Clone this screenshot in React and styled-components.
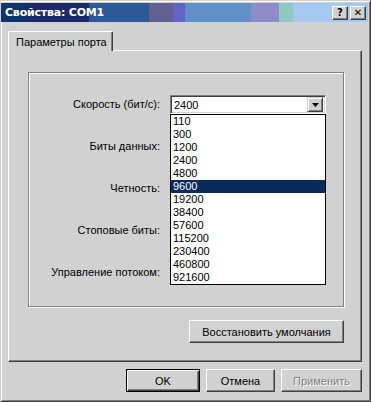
import React from 'react';
import styled, { createGlobalStyle } from 'styled-components';

const face = '#d1d1d1';

const GlobalStyle = createGlobalStyle`
  html, body {
    margin: 0;
    padding: 0;
    background: ${face};
  }
  * { box-sizing: border-box; }
`;

const speeds = ['110', '300', '1200', '2400', '4800', '9600', '19200', '38400', '57600', '115200', '230400', '460800', '921600'];

// only the first combo shows its value, the rest sit under the open list
const fields = [
  { label: 'Скорость (бит/с):', value: '2400', open: true },
  { label: 'Биты данных:' },
  { label: 'Четность:' },
  { label: 'Стоповые биты:' },
  { label: 'Управление потоком:' },
];

const App = () => {
  return (
    <>
      <GlobalStyle />
      <Window>
        <TitleBar>
          <Title>Свойства: COM1</Title>
          <CaptionButtons>
            <CaptionButton>?</CaptionButton>
            <CaptionButton>✕</CaptionButton>
          </CaptionButtons>
        </TitleBar>
        <Body>
          <TabStrip>
            <Tab>Параметры порта</Tab>
          </TabStrip>
          <TabPanel>
            <PanelColumn>
              <GroupBox>
                {fields.map((f) => (
                  <React.Fragment key={f.label}>
                    <Label>{f.label}</Label>
                    <Combo>
                      <ComboValue>{f.value}</ComboValue>
                      <ArrowButton>
                        <svg width="7" height="4" viewBox="0 0 7 4">
                          <path d="M0 0h7L3.5 4z" fill="#000" />
                        </svg>
                      </ArrowButton>
                      {f.open && (
                        <DropList>
                          {speeds.map((s) => (
                            <DropItem key={s} $selected={s === '9600'}>{s}</DropItem>
                          ))}
                        </DropList>
                      )}
                    </Combo>
                  </React.Fragment>
                ))}
              </GroupBox>
              <RestoreRow>
                <Button $w={155}>Восстановить умолчания</Button>
              </RestoreRow>
            </PanelColumn>
          </TabPanel>
          <DialogButtons>
            <Button $w={74} $default>OK</Button>
            <Button $w={69}>Отмена</Button>
            <Button $w={81} disabled>Применить</Button>
          </DialogButtons>
        </Body>
      </Window>
    </>
  );
};

const Window = styled.div`
  width: 371px;
  height: 402px;
  background: ${face};
  border: 1px solid;
  border-color: ${face} #404040 #404040 ${face};
  box-shadow: inset 1px 1px #fff, inset -1px -1px #808080;
  padding: 2px;
  font-family: "Liberation Sans", Arial, sans-serif;
  font-size: 11px;
  color: #000;
  display: flex;
  flex-direction: column;
`;

const TitleBar = styled.div`
  height: 19px;
  margin-left: -2px;
  display: flex;
  align-items: center;
  justify-content: space-between;
  padding: 0 2px 0 4px;
  background: linear-gradient(to right,
    #10346a 0px, #10346a 28px,
    #202a66 28px, #202a66 88px,
    #2c5a94 88px, #2c5a94 148px,
    #62608f 148px, #62608f 172px,
    #6462c8 172px, #6462c8 184px,
    #5f90c8 184px, #5f90c8 250px,
    #8e8cc8 250px, #8e8cc8 278px,
    #90c8c2 278px, #90c8c2 292px,
    #a4c8f0 292px, #a4c8f0 100%);
`;

const Title = styled.span`
  color: #fff;
  font-family: "DejaVu Sans", Verdana, sans-serif;
  font-weight: bold;
  font-size: 11px;
  letter-spacing: -0.2px;
`;

const CaptionButtons = styled.div`
  display: flex;
  gap: 2px;
`;

const CaptionButton = styled.div`
  width: 16px;
  height: 14px;
  background: ${face};
  border: 1px solid;
  border-color: #fff #404040 #404040 #fff;
  box-shadow: inset -1px -1px #808080;
  display: flex;
  align-items: center;
  justify-content: center;
  font-family: "DejaVu Sans", sans-serif;
  font-weight: bold;
  font-size: 10px;
  line-height: 1;
`;

const Body = styled.div`
  flex: 1;
  display: flex;
  flex-direction: column;
  padding: 9px 5px 0 5px;
`;

const TabStrip = styled.div`
  display: flex;
  height: 19px;
  position: relative;
  z-index: 1;
`;

const Tab = styled.div`
  width: 105px;
  height: 20px;
  padding: 4px 0 0 7px;
  background: ${face};
  border-top: 1px solid #fff;
  border-left: 1px solid #fff;
  border-right: 1px solid #404040;
  box-shadow: inset -1px 0 #808080;
  border-radius: 2px 2px 0 0;
`;

const TabPanel = styled.div`
  width: 354px;
  height: 312px;
  border: 1px solid;
  border-color: #fff #404040 #404040 #fff;
  box-shadow: inset -1px -1px #808080;
  padding: 21px 0 0 19px;
`;

const PanelColumn = styled.div`
  width: 316px;
  display: flex;
  flex-direction: column;
`;

const GroupBox = styled.div`
  height: 235px;
  border: 1px solid #808080;
  box-shadow: inset 1px 1px #fff, 1px 1px #fff;
  padding-top: 22px;
  display: grid;
  grid-template-columns: 141px 156px;
  grid-auto-rows: 19px;
  row-gap: 23px;
  align-content: start;
`;

const Label = styled.div`
  text-align: right;
  padding-right: 10px;
  line-height: 19px;
`;

const Combo = styled.div`
  position: relative;
  height: 19px;
  background: #fff;
  border: 1px solid;
  border-color: #808080 #fff #fff #808080;
  box-shadow: inset 1px 1px #404040, inset -1px -1px ${face};
  display: flex;
  align-items: center;
  padding: 2px;
`;

const ComboValue = styled.span`
  flex: 1;
  padding-left: 1px;
`;

const ArrowButton = styled.div`
  width: 16px;
  height: 15px;
  background: ${face};
  border: 1px solid;
  border-color: ${face} #404040 #404040 ${face};
  box-shadow: inset 1px 1px #fff, inset -1px -1px #808080;
  display: flex;
  align-items: center;
  justify-content: center;
`;

const DropList = styled.div`
  position: absolute;
  left: -1px;
  top: 18px;
  width: 156px;
  border: 1px solid #000;
  background: #fff;
  z-index: 2;
`;

const DropItem = styled.div`
  height: 13px;
  line-height: 13px;
  padding-left: 2px;
  background: ${(p) => (p.$selected ? '#0a2a5c' : '#fff')};
  color: ${(p) => (p.$selected ? '#fff' : '#000')};
`;

const RestoreRow = styled.div`
  display: flex;
  justify-content: flex-end;
  margin-top: 13px;
`;

const Button = styled.button`
  width: ${(p) => p.$w}px;
  height: 23px;
  margin: 0;
  padding: 0;
  font-family: "Liberation Sans", Arial, sans-serif;
  font-size: 11px;
  color: #000;
  background: ${face};
  border: 1px solid;
  border-color: ${(p) => (p.$default ? '#000' : '#fff #404040 #404040 #fff')};
  box-shadow: ${(p) =>
    p.$default
      ? 'inset 1px 1px #fff, inset -1px -1px #404040, inset -2px -2px #808080'
      : 'inset -1px -1px #808080'};
  &:disabled {
    color: #808080;
    text-shadow: 1px 1px #fff;
  }
`;

const DialogButtons = styled.div`
  display: flex;
  justify-content: flex-end;
  gap: 6px;
  margin-top: 7px;
  padding-right: 1px;
`;

export default App;
